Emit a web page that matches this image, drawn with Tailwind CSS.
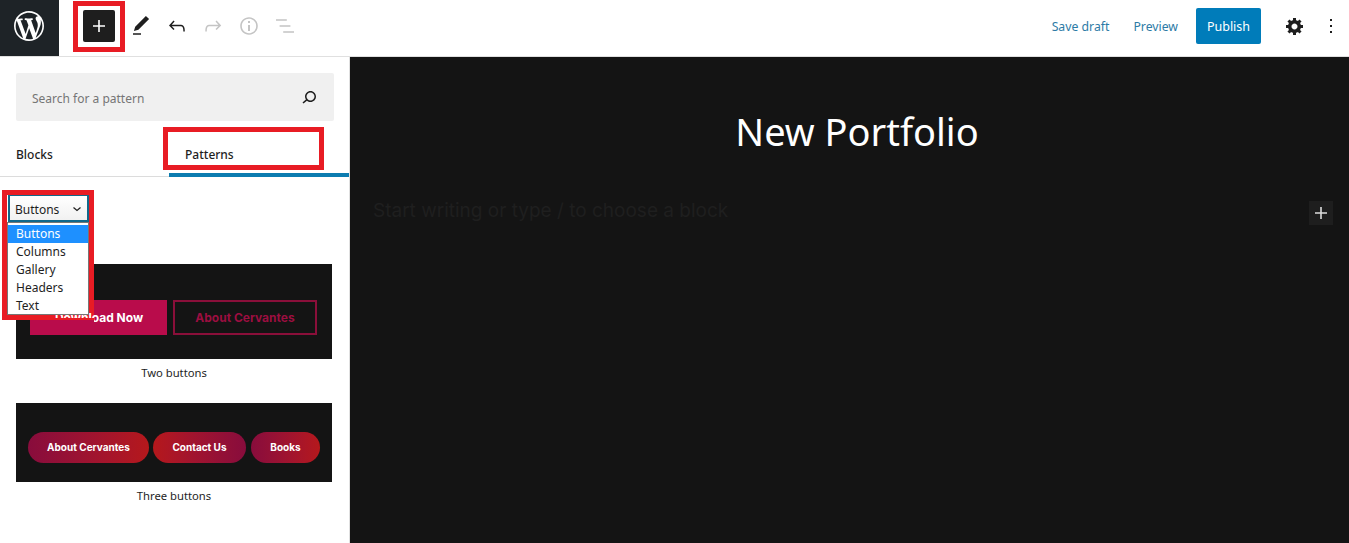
<!DOCTYPE html>
<html lang="en">
<head>
  <meta charset="UTF-8" />
  <title>New Portfolio</title>
  <script src="https://cdn.jsdelivr.net/npm/@tailwindcss/browser@4"></script>
</head>
<body class="bg-white h-[543px] w-[1349px] overflow-hidden font-['Noto_Sans','Open_Sans',sans-serif] text-[13px] text-[#1e1e1e]">

  <!-- top bar -->
  <header class="h-[57px] flex items-center pb-[4px] border-b border-[#e0e0e0] bg-white">
    <a class="self-start w-[59px] h-[56px] bg-[#1e2327] flex items-center justify-center pb-[4px] pr-[1px]">
      <svg width="30" height="30" viewBox="0 0 20 20" fill="#fff"><path d="M20 10c0-5.51-4.49-10-10-10C4.48 0 0 4.49 0 10c0 5.52 4.48 10 10 10 5.51 0 10-4.48 10-10zM7.78 15.37L4.37 6.22c.55-.02 1.17-.08 1.17-.08.5-.06.44-1.13-.06-1.11 0 0-1.45.11-2.37.11-.18 0-.37 0-.58-.01C4.12 2.69 6.87 1.11 10 1.11c2.33 0 4.45.87 6.05 2.34-.68-.11-1.65.39-1.65 1.58 0 .74.45 1.36.9 2.1.35.61.55 1.36.55 2.46 0 1.49-1.4 5-1.4 5l-3.03-8.37c.54-.02.82-.17.82-.17.5-.05.44-1.25-.06-1.22 0 0-1.44.12-2.38.12-.87 0-2.33-.12-2.33-.12-.5-.03-.56 1.2-.06 1.22l.92.08 1.26 3.41zM17.41 10c.24-.64.74-1.87.43-4.25.7 1.29 1.05 2.71 1.05 4.25 0 3.29-1.73 6.24-4.4 7.78.97-2.59 1.94-5.2 2.92-7.78zM6.1 18.09C3.12 16.65 1.11 13.53 1.11 10c0-1.3.23-2.48.72-3.59C3.25 10.3 4.67 14.2 6.1 18.09zm4.03-6.63l2.58 6.98c-.86.29-1.76.45-2.71.45-.79 0-1.57-.11-2.29-.33.81-2.38 1.62-4.74 2.42-7.1z"/></svg>
    </a>
    <button class="ml-[24px] w-[32px] h-[32px] rounded-[2px] bg-[#1e1e1e] flex items-center justify-center">
      <svg width="24" height="24" viewBox="0 0 24 24" fill="#fff"><path d="M18 11.2h-5.2V6h-1.6v5.2H6v1.6h5.2V18h1.6v-5.2H18z"/></svg>
    </button>
    <div class="ml-[8px] flex">
      <button class="w-[36px] h-[36px] flex items-center justify-center">
        <svg width="24" height="24" viewBox="0 0 24 24" fill="#1e1e1e"><path d="M20.1 5.1L16.9 2 6.2 12.7l-1.3 4.4 4.5-1.3L20.1 5.1zM4 20.8h8v-1.5H4v1.5z"/></svg>
      </button>
      <button class="w-[36px] h-[36px] flex items-center justify-center">
        <svg width="24" height="24" viewBox="0 0 24 24" fill="#1e1e1e"><path d="M18.3 11.7c-.6-.6-1.4-.9-2.3-.9H6.7l2.9-3.3-1.1-1-4.5 5L8.5 16l1-1-2.7-2.7H16c.5 0 .9.2 1.3.5 1 1 1 3.4 1 4.5v.3h1.5v-.2c0-1.5 0-4.3-1.5-5.7z"/></svg>
      </button>
      <button class="w-[36px] h-[36px] flex items-center justify-center">
        <svg width="24" height="24" viewBox="0 0 24 24" fill="#c4c4c4"><path d="M15.6 6.5l-1.1 1 2.9 3.3H8c-.9 0-1.7.3-2.3.9-1.4 1.5-1.4 4.2-1.4 5.6v.2h1.5v-.3c0-1.1 0-3.5 1-4.5.3-.3.7-.5 1.3-.5h9.2L14.5 15l1.1 1.1 4.6-4.6-4.6-5z"/></svg>
      </button>
      <button class="w-[36px] h-[36px] flex items-center justify-center">
        <svg width="24" height="24" viewBox="0 0 24 24" fill="#c4c4c4"><path d="M12 3.2c-4.8 0-8.8 3.9-8.8 8.8 0 4.8 3.9 8.8 8.8 8.8 4.8 0 8.8-3.9 8.8-8.8 0-4.8-4-8.8-8.8-8.8zm0 16c-4 0-7.2-3.3-7.2-7.2C4.8 8 8 4.8 12 4.8s7.2 3.3 7.2 7.2c0 4-3.2 7.2-7.2 7.2zM11 17h2v-6h-2v6zm0-8h2V7h-2v2z"/></svg>
      </button>
      <button class="w-[36px] h-[36px] flex items-center justify-center">
        <svg width="24" height="24" viewBox="0 0 24 24" fill="#c4c4c4"><path d="M13.8 5.2H3v1.5h10.8V5.2zm-3.6 12v1.5H21v-1.5H10.2zm7.2-6H6.6v1.5h10.8v-1.5z"/></svg>
      </button>
    </div>
    <div class="ml-auto flex items-center">
      <a class="text-[#2d7ba6] text-[12.25px] pt-[2px]">Save draft</a>
      <a class="ml-[24px] text-[#2d7ba6] text-[12.25px] pt-[2px]">Preview</a>
      <button class="ml-[18px] w-[65px] h-[36px] pt-[2px] rounded-[2px] bg-[#007cba] text-white text-[12.5px]">Publish</button>
      <button class="ml-[16px] w-[36px] h-[36px] flex items-center justify-center">
        <svg width="20" height="20" viewBox="0 0 20 20" fill="#1e1e1e"><path d="M18 12h-2.18c-.17.7-.44 1.35-.81 1.93l1.54 1.54-2.1 2.1-1.54-1.54c-.58.36-1.23.63-1.91.79V19H8v-2.18c-.68-.16-1.33-.43-1.91-.79l-1.54 1.54-2.12-2.12 1.54-1.54c-.36-.58-.63-1.23-.79-1.91H1V9.03h2.17c.16-.7.44-1.35.8-1.94L2.43 5.55l2.1-2.1 1.54 1.54c.58-.37 1.24-.64 1.93-.81V2h3v2.18c.68.16 1.33.43 1.91.79l1.54-1.54 2.12 2.12-1.54 1.54c.36.59.64 1.24.8 1.94H18V12zm-8.5 1.5c1.66 0 3-1.34 3-3s-1.34-3-3-3-3 1.34-3 3 1.34 3 3 3z"/></svg>
      </button>
      <button class="w-[36px] h-[36px] flex items-center justify-center">
        <svg width="24" height="24" viewBox="0 0 24 24" fill="#1e1e1e"><path d="M13 19h-2v-2h2v2zm0-6h-2v-2h2v2zm0-6h-2V5h2v2z"/></svg>
      </button>
    </div>
  </header>

  <div class="flex h-[486px]">
    <!-- inserter sidebar -->
    <aside class="relative w-[350px] shrink-0 border-r border-[#e0e0e0] bg-white">
      <div class="mx-[16px] mt-[16px] h-[48px] w-[318px] bg-[#f0f0f0] rounded-[2px] flex items-center justify-between pl-[16px] pr-[13px]">
        <span class="text-[#757575] text-[12px] pt-[3px]">Search for a pattern</span>
        <svg width="24" height="24" viewBox="0 0 24 24" fill="#1e1e1e"><path d="M13.5 6C10.5 6 8 8.5 8 11.5c0 1.1.3 2.1.9 3l-3.4 3 1 1.1 3.4-2.9c1 .9 2.2 1.4 3.6 1.4 3 0 5.5-2.5 5.5-5.5C19 8.5 16.5 6 13.5 6zm0 9.5c-2.2 0-4-1.8-4-4s1.8-4 4-4 4 1.8 4 4-1.8 4-4 4z"/></svg>
      </div>

      <div class="mt-[16px] h-[40px] flex border-b border-[#dcdcdc]">
        <div class="w-[169px] pl-[16px] pt-[9px] font-medium text-[12px]">Blocks</div>
        <div class="flex-1 pl-[16px] pt-[9px] font-medium text-[12px] border-b-[4px] border-[#0c7cb0] h-[40px]">Patterns</div>
      </div>

      <div class="h-[87px]"></div>

      <div class="mx-[16px] w-[316px] h-[95px] bg-[#141414] flex items-start gap-[6px] pl-[14px] pt-[36px] font-['Inter',sans-serif] text-[12px] font-bold">
        <span class="w-[137px] h-[35px] bg-[#b90c4b] text-white flex items-center justify-center"><span class="relative z-20 pl-px">Download Now</span></span>
        <span class="w-[144px] h-[35px] border-2 border-[#8a0f3a] text-[#9c0e40] flex items-center justify-center">About Cervantes</span>
      </div>
      <p class="w-[316px] mx-[16px] mt-[6px] text-center text-[11.25px] leading-[16px]">Two buttons</p>

      <div class="mt-[22px] mx-[16px] w-[316px] h-[79px] bg-[#141414] flex items-start gap-[4px] pl-[12px] pt-[29px] font-['Inter',sans-serif] text-[10px] font-bold text-white">
        <span class="w-[121px] h-[31px] rounded-full bg-gradient-to-r from-[#880c3c] to-[#b5181b] flex items-center justify-center">About Cervantes</span>
        <span class="w-[93px] h-[31px] rounded-full bg-gradient-to-r from-[#b5181b] to-[#880c3c] flex items-center justify-center">Contact Us</span>
        <span class="ml-px w-[69px] h-[31px] rounded-full bg-gradient-to-r from-[#880c3c] to-[#b5181b] flex items-center justify-center">Books</span>
      </div>
      <p class="w-[316px] mx-[16px] mt-[6px] text-center text-[11.25px] leading-[16px]">Three buttons</p>

      <!-- native select with its open list, lies over the first preview -->
      <div class="absolute left-[8px] top-[137px] w-[81px] h-[28px] border-2 border-[#11688a] bg-gradient-to-b from-white to-[#f1f1f1] pl-[5px] pt-[4px] flex items-center text-[12px]">
        Buttons
        <svg class="absolute right-[4px] top-[7px]" width="12" height="12" viewBox="0 0 12 12" fill="none" stroke="#1e1e1e" stroke-width="1.2"><path d="M2.5 4.5l3.5 3 3.5-3"/></svg>
      </div>
      <ul class="absolute z-30 left-[7px] top-[165px] w-[82px] h-[93px] border border-[#767676] bg-white pt-[2px] text-[12px] leading-[18px]">
        <li class="bg-[#1e90ff] text-white pl-[8px]">Buttons</li>
        <li class="pl-[8px]">Columns</li>
        <li class="pl-[8px]">Gallery</li>
        <li class="pl-[8px]">Headers</li>
        <li class="pl-[8px]">Text</li>
      </ul>
      <!-- only the tops of the hidden letters show through the annotation -->
      <div class="absolute z-30 left-[30px] top-[261px] w-[64px] h-[5px] border-t-2 border-[#e81c24] bg-[#b90c4b]"></div>
    </aside>

    <!-- editor canvas -->
    <main class="relative flex-1 bg-[#141414]">
      <h1 class="mt-[47px] text-center text-white text-[38px] leading-[54px] pl-[15px]">New Portfolio</h1>
      <div class="mt-[39px] ml-[23px] mr-[16px] flex items-center justify-between">
        <p class="font-['Inter',sans-serif] text-[19px] text-[#1f1f1f] pb-[4px]">Start writing or type / to choose a block</p>
        <button class="w-[24px] h-[24px] bg-[#1e1e1e] flex items-center justify-center">
          <svg width="24" height="24" viewBox="0 0 24 24" fill="#ddd"><path d="M18 11.2h-5.2V6h-1.6v5.2H6v1.6h5.2V18h1.6v-5.2H18z"/></svg>
        </button>
      </div>
    </main>
  </div>

  <!-- red annotation boxes drawn over the screenshot -->
  <div class="absolute left-[73px] top-[1px] w-[52px] h-[51px] border-[5px] border-[#e81c24]"></div>
  <div class="absolute left-[163px] top-[127px] w-[161px] h-[43px] border-[5px] border-[#e81c24]"></div>
  <div class="absolute z-10 left-[2px] top-[190px] w-[92px] h-[130px] border-[5px] border-[#e81c24]"></div>
</body>
</html>
